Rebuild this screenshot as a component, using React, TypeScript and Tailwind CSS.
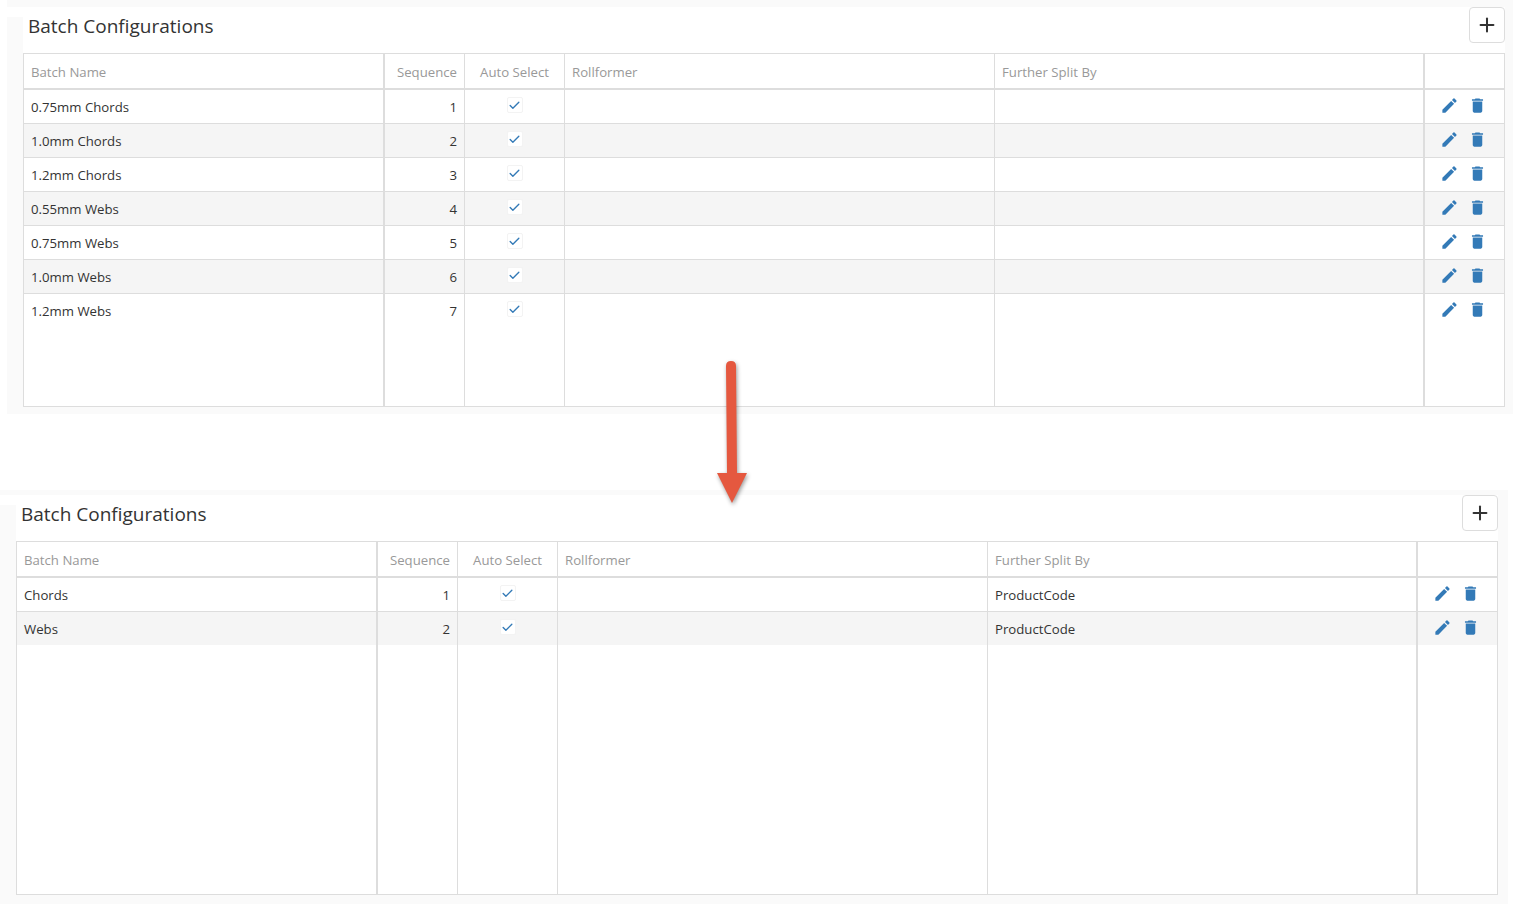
import { Plus, Check } from "lucide-react";
import { MdEdit, MdDelete } from "react-icons/md";

type Row = { name: string; seq: number; split?: string };

const beforeRows: Row[] = [
  { name: "0.75mm Chords", seq: 1 },
  { name: "1.0mm Chords", seq: 2 },
  { name: "1.2mm Chords", seq: 3 },
  { name: "0.55mm Webs", seq: 4 },
  { name: "0.75mm Webs", seq: 5 },
  { name: "1.0mm Webs", seq: 6 },
  { name: "1.2mm Webs", seq: 7 },
];

const afterRows: Row[] = [
  { name: "Chords", seq: 1, split: "ProductCode" },
  { name: "Webs", seq: 2, split: "ProductCode" },
];

const gridCols = "grid grid-cols-[361px_80px_100px_430px_430px_79px]";

const BatchRow = ({ row, index, last }: { row: Row; index: number; last: boolean }) => (
  <div
    className={`${gridCols} text-[13.2px] text-[#333] ${index % 2 === 1 ? "bg-[#f5f5f5]" : "bg-white"} ${
      last ? "h-[33px]" : "h-[34px] border-b border-[#ddd]"
    }`}
  >
    <div className="border-r-2 border-[#ddd] pl-[7px] pt-[7px] leading-[20px]">{row.name}</div>
    <div className="border-r border-[#ddd] pr-[7px] pt-[7px] text-right leading-[20px]">{row.seq}</div>
    <div className="flex justify-center border-r border-[#ddd] pt-[7px]">
      <span className="flex h-[16px] w-[16px] items-center justify-center rounded-[2px] border border-[#f3f3f3] bg-white">
        <Check size={13} strokeWidth={2.5} className="text-[#337ab7]" />
      </span>
    </div>
    <div className="border-r border-[#ddd]" />
    <div className="border-r-2 border-[#ddd] pl-[7px] pt-[7px] leading-[20px]">{row.split}</div>
    <div className="flex items-start pl-[15px] pt-[6px] text-[#337ab7]">
      <MdEdit size={19} />
      <MdDelete size={19} className="ml-[9px]" />
    </div>
  </div>
);

const BatchTable = ({ rows }: { rows: Row[] }) => (
  <div className="flex h-[354px] w-[1482px] flex-col border border-[#ddd] bg-white">
    <div className={`${gridCols} h-[36px] border-b-2 border-[#ddd] text-[13.2px] leading-[36px] text-[#999]`}>
      <div className="border-r-2 border-[#ddd] pl-[7px]">Batch Name</div>
      <div className="border-r border-[#ddd] pr-[7px] text-right">Sequence</div>
      <div className="border-r border-[#ddd] text-center">Auto Select</div>
      <div className="border-r border-[#ddd] pl-[7px]">Rollformer</div>
      <div className="border-r-2 border-[#ddd] pl-[7px]">Further Split By</div>
      <div />
    </div>
    {rows.map((row, i) => (
      <BatchRow key={row.name} row={row} index={i} last={i === rows.length - 1} />
    ))}
    {/* empty space under the rows, column lines keep going */}
    <div className={`${gridCols} flex-1`}>
      <div className="border-r-2 border-[#ddd]" />
      <div className="border-r border-[#ddd]" />
      <div className="border-r border-[#ddd]" />
      <div className="border-r border-[#ddd]" />
      <div className="border-r-2 border-[#ddd]" />
      <div />
    </div>
  </div>
);

const Panel = ({ rows, className }: { rows: Row[]; className: string }) => (
  <section className={`bg-[#fafafa] pl-[16px] ${className}`}>
    <div className="-ml-[16px] h-[10px] w-[1498px] bg-white" />
    <div className="flex h-[36px] w-[1482px] items-start justify-between bg-white">
      <h2 className="pl-[5px] text-[19px] font-normal leading-[18px] text-[#333]">Batch Configurations</h2>
      <button className="-mt-[10px] flex h-[36px] w-[36px] items-center justify-center rounded-[4px] border border-[#ddd] bg-white text-[#333]">
        <Plus size={22} strokeWidth={2.2} />
      </button>
    </div>
    <BatchTable rows={rows} />
  </section>
);

export default function App() {
  return (
    <div className="relative h-[904px] w-[1515px] overflow-hidden bg-white font-['Open_Sans','Noto_Sans',sans-serif]">
      <Panel rows={beforeRows} className="ml-[7px] w-[1506px] pb-[7px] pt-[7px]" />
      <Panel rows={afterRows} className="mt-[76px] w-[1508px] pb-[9px] pt-[5px]" />

      {/* red arrow drawn over the panels */}
      <svg
        className="absolute left-[710px] top-[355px] drop-shadow-[1px_2px_2px_rgba(0,0,0,0.4)]"
        width="44"
        height="155"
        viewBox="0 0 44 155"
      >
        <path d="M16 11 Q16 6 21 6 Q26 6 26 11 L27 118 L37 118 L22 148 L7 118 L17 118 Z" fill="#e5583f" />
      </svg>
    </div>
  );
}
